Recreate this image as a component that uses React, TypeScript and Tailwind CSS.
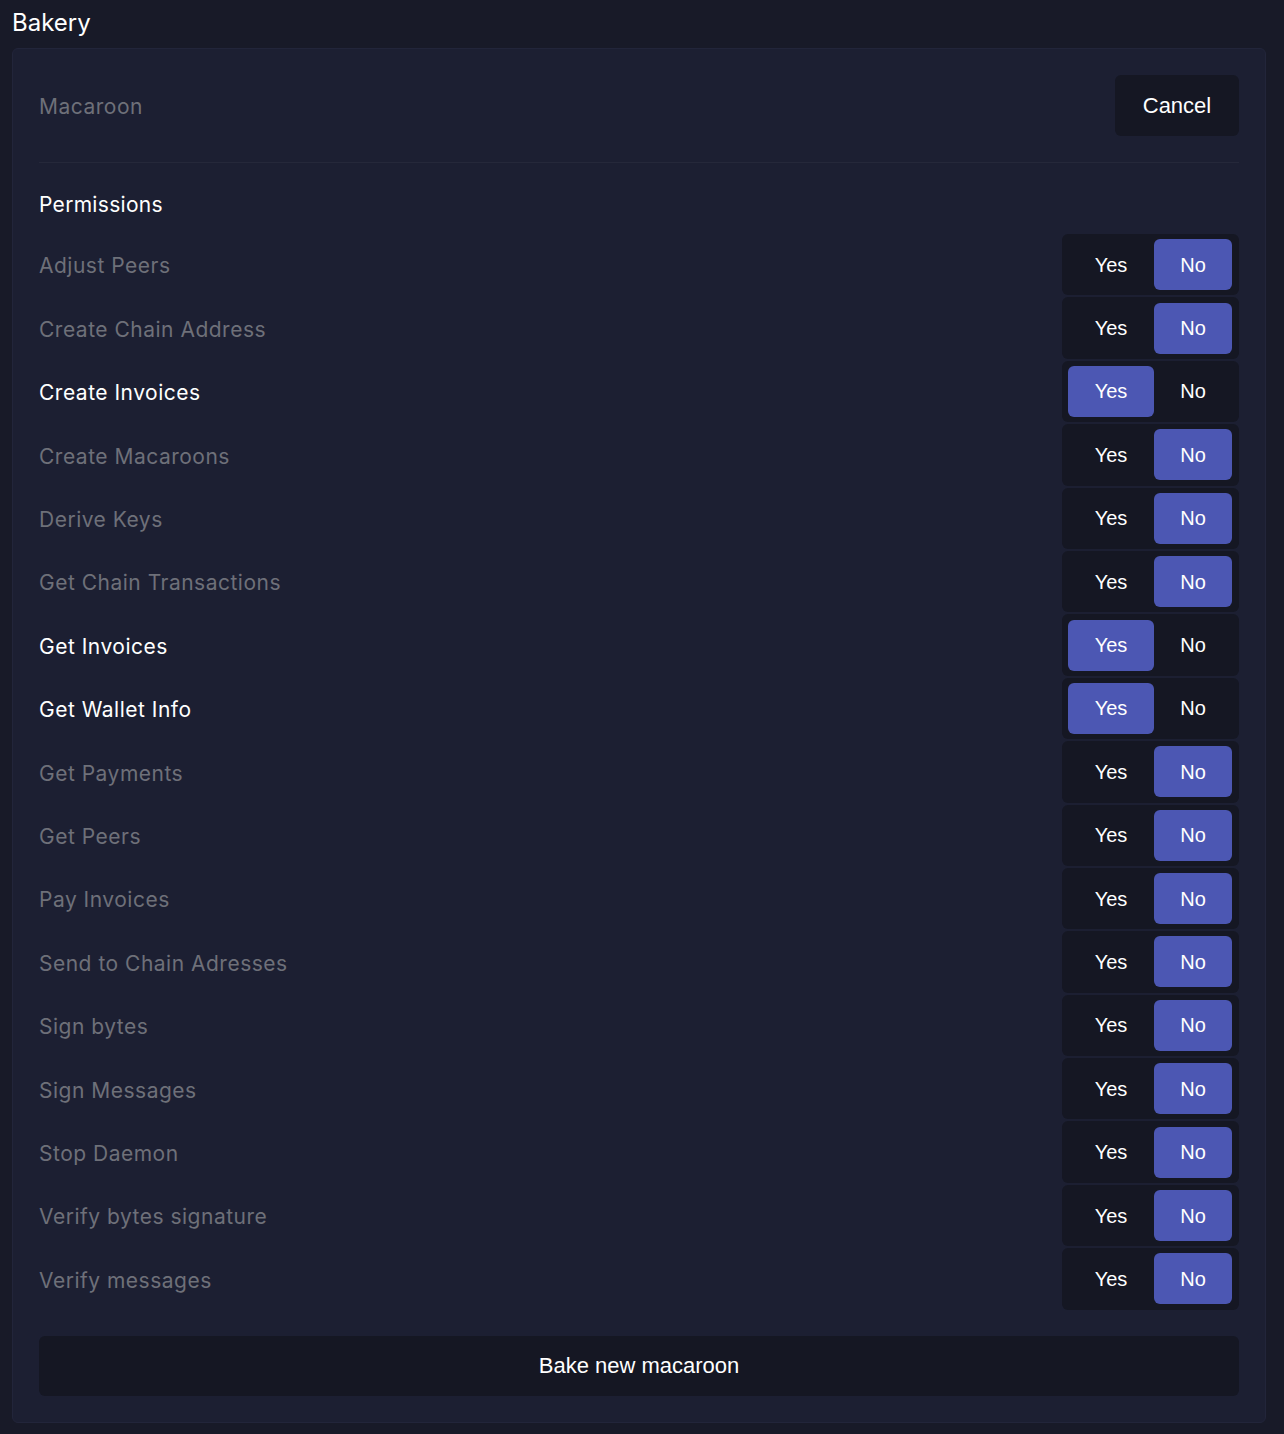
const permissions: { label: string; allowed: boolean }[] = [
  { label: "Adjust Peers", allowed: false },
  { label: "Create Chain Address", allowed: false },
  { label: "Create Invoices", allowed: true },
  { label: "Create Macaroons", allowed: false },
  { label: "Derive Keys", allowed: false },
  { label: "Get Chain Transactions", allowed: false },
  { label: "Get Invoices", allowed: true },
  { label: "Get Wallet Info", allowed: true },
  { label: "Get Payments", allowed: false },
  { label: "Get Peers", allowed: false },
  { label: "Pay Invoices", allowed: false },
  { label: "Send to Chain Adresses", allowed: false },
  { label: "Sign bytes", allowed: false },
  { label: "Sign Messages", allowed: false },
  { label: "Stop Daemon", allowed: false },
  { label: "Verify bytes signature", allowed: false },
  { label: "Verify messages", allowed: false },
];

function Toggle({ allowed }: { allowed: boolean }) {
  return (
    <div className="flex h-[61.4px] w-[177px] items-center rounded-md bg-[#151723] pl-[6px] pr-[7px] font-['Liberation_Sans',Arial,sans-serif] text-[20px] text-white">
      <button
        className={`h-[51px] w-[86px] rounded-md ${allowed ? "bg-[#4c57b3]" : ""}`}
      >
        Yes
      </button>
      <button
        className={`h-[51px] w-[78px] rounded-md ${!allowed ? "bg-[#4c57b3]" : ""}`}
      >
        No
      </button>
    </div>
  );
}

export default function App() {
  return (
    <div className="min-h-[1434px] bg-[#181a28] pl-3 pr-[18px] pb-[10px] font-['Inter',sans-serif]">
      <h1 className="h-[48px] pt-[6px] text-[24px] leading-[34px] text-white">Bakery</h1>

      <div className="rounded-md border border-[#22253a] bg-[#1c1f32] px-[26px] py-[26px]">
        <div className="flex items-center justify-between">
          <span className="mt-[2px] text-[21px] tracking-[0.5px] text-[#6e7079]">Macaroon</span>
          <button className="h-[61px] w-[124px] rounded-md bg-[#151723] font-['Liberation_Sans',Arial,sans-serif] text-[22px] text-white">
            Cancel
          </button>
        </div>

        <div className="mt-[26px] border-t border-[#25283a]" />

        <h2 className="mt-[22px] text-[21px] leading-[40px] tracking-[0.3px] text-white">
          Permissions
        </h2>

        <div className="mt-[9px] flex flex-col gap-[2px]">
          {permissions.map((p) => (
            <div key={p.label} className="flex items-center justify-between">
              <span
                className={`mt-[3px] text-[21px] tracking-[0.5px] ${p.allowed ? "text-white" : "text-[#6e7079]"}`}
              >
                {p.label}
              </span>
              <Toggle allowed={p.allowed} />
            </div>
          ))}
        </div>

        <button className="mt-[26px] h-[60px] w-full rounded-md bg-[#151723] font-['Liberation_Sans',Arial,sans-serif] text-[22px] text-white">
          Bake new macaroon
        </button>
      </div>
    </div>
  );
}
